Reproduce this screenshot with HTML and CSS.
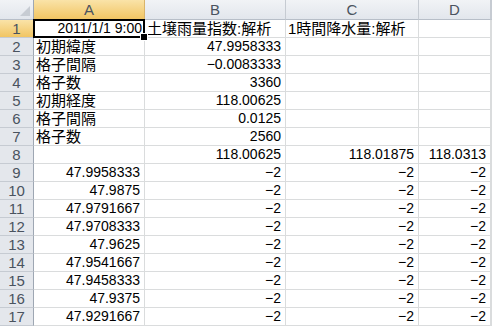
FILE: index.html
```html
<!DOCTYPE html>
<html lang="ja">
<head>
  <meta charset="UTF-8">
  <title>Sheet1</title>
  <link rel="stylesheet" href="styles.css">
</head>
<body>
  <table class="sheet">
    <colgroup>
      <col class="c-head"><col class="c-a"><col class="c-b"><col class="c-c"><col class="c-d"><col class="c-e">
    </colgroup>
    <thead>
      <tr>
        <th class="corner"></th>
        <th class="active">A</th>
        <th>B</th>
        <th>C</th>
        <th>D</th>
        <th></th>
      </tr>
    </thead>
    <tbody>
      <tr><th class="active">1</th><td class="n selected">2011/1/1 9:00</td><td>土壌雨量指数:解析</td><td>1時間降水量:解析</td><td></td><td></td></tr>
      <tr><th>2</th><td>初期緯度</td><td class="n">47.9958333</td><td></td><td></td><td></td></tr>
      <tr><th>3</th><td>格子間隔</td><td class="n">−0.0083333</td><td></td><td></td><td></td></tr>
      <tr><th>4</th><td>格子数</td><td class="n">3360</td><td></td><td></td><td></td></tr>
      <tr><th>5</th><td>初期経度</td><td class="n">118.00625</td><td></td><td></td><td></td></tr>
      <tr><th>6</th><td>格子間隔</td><td class="n">0.0125</td><td></td><td></td><td></td></tr>
      <tr><th>7</th><td>格子数</td><td class="n">2560</td><td></td><td></td><td></td></tr>
      <tr><th>8</th><td></td><td class="n">118.00625</td><td class="n">118.01875</td><td class="n">118.0313</td><td></td></tr>
      <tr><th>9</th><td class="n">47.9958333</td><td class="n">−2</td><td class="n">−2</td><td class="n">−2</td><td></td></tr>
      <tr><th>10</th><td class="n">47.9875</td><td class="n">−2</td><td class="n">−2</td><td class="n">−2</td><td></td></tr>
      <tr><th>11</th><td class="n">47.9791667</td><td class="n">−2</td><td class="n">−2</td><td class="n">−2</td><td></td></tr>
      <tr><th>12</th><td class="n">47.9708333</td><td class="n">−2</td><td class="n">−2</td><td class="n">−2</td><td></td></tr>
      <tr><th>13</th><td class="n">47.9625</td><td class="n">−2</td><td class="n">−2</td><td class="n">−2</td><td></td></tr>
      <tr><th>14</th><td class="n">47.9541667</td><td class="n">−2</td><td class="n">−2</td><td class="n">−2</td><td></td></tr>
      <tr><th>15</th><td class="n">47.9458333</td><td class="n">−2</td><td class="n">−2</td><td class="n">−2</td><td></td></tr>
      <tr><th>16</th><td class="n">47.9375</td><td class="n">−2</td><td class="n">−2</td><td class="n">−2</td><td></td></tr>
      <tr><th>17</th><td class="n">47.9291667</td><td class="n">−2</td><td class="n">−2</td><td class="n">−2</td><td></td></tr>
    </tbody>
  </table>
</body>
</html>
```

FILE: styles.css
```css
* {
  box-sizing: border-box;
}
body, html {
  margin: 0;
  padding: 0;
  background: #fff;
  overflow: hidden;
}

.sheet {
  border-collapse: separate;
  border-spacing: 0;
  table-layout: fixed;
  width: 492px;
  font-family: "Liberation Sans", "Noto Sans CJK JP", sans-serif;
  font-size: 15px;
  color: #000;
}

.c-head { width: 34px; }
.c-a { width: 111px; }
.c-b { width: 141px; }
.c-c { width: 133px; }
.c-d { width: 72px; }

.sheet th, .sheet td {
  padding: 0;
  white-space: nowrap;
  overflow: visible;
}

/* column headers */
.sheet thead th {
  height: 20px;
  background: linear-gradient(#f1f3f6, #e2e6ec);
  border-right: 1px solid #c6cbd2;
  border-bottom: 1px solid #b7bec8;
  font-weight: normal;
  font-size: 15px;
  color: #4a535f;
  text-align: center;
  vertical-align: middle;
  line-height: 18px;
}
.sheet thead th.corner {
  position: relative;
  border-right-color: #9ea7b3;
}
.corner::after {
  content: "";
  position: absolute;
  right: 3px;
  bottom: 3px;
  border-style: solid;
  border-width: 0 0 10px 10px;
  border-color: transparent transparent #c7ccd3 transparent;
}
.sheet thead th.active {
  background: linear-gradient(#fae3a8, #f1c563);
  border-bottom-color: #e4a53a;
  border-right-color: #d9b46a;
}

/* row headers */
.sheet tbody th {
  height: 18px;
  background: #e4e7ec;
  border-right: 1px solid #9ea7b3;
  border-bottom: 1px solid #c6cbd2;
  font-weight: normal;
  font-size: 15px;
  color: #4a535f;
  text-align: center;
  line-height: 17px;
  vertical-align: bottom;
}
.sheet tbody th.active {
  background: linear-gradient(#fae3a8, #f1c563);
  border-right-color: #e4a53a;
}

/* cells */
.sheet td {
  height: 18px;
  border-right: 1px solid #dadcdd;
  border-bottom: 1px solid #dadcdd;
  padding-left: 2px;
  line-height: 17px;
  vertical-align: bottom;
}
.sheet td.n {
  text-align: right;
  padding-left: 0;
  padding-right: 4px;
  font-size: 14px;
}

.sheet td.selected {
  position: relative;
  padding-right: 2px;
}
.selected::before {
  content: "";
  position: absolute;
  left: -1px;
  top: -1px;
  right: -1px;
  bottom: -1px;
  border: 2px solid #000;
}
.selected::after {
  content: "";
  position: absolute;
  right: -4px;
  bottom: -4px;
  width: 6px;
  height: 6px;
  background: #000;
  border: 1px solid #fff;
}
```
